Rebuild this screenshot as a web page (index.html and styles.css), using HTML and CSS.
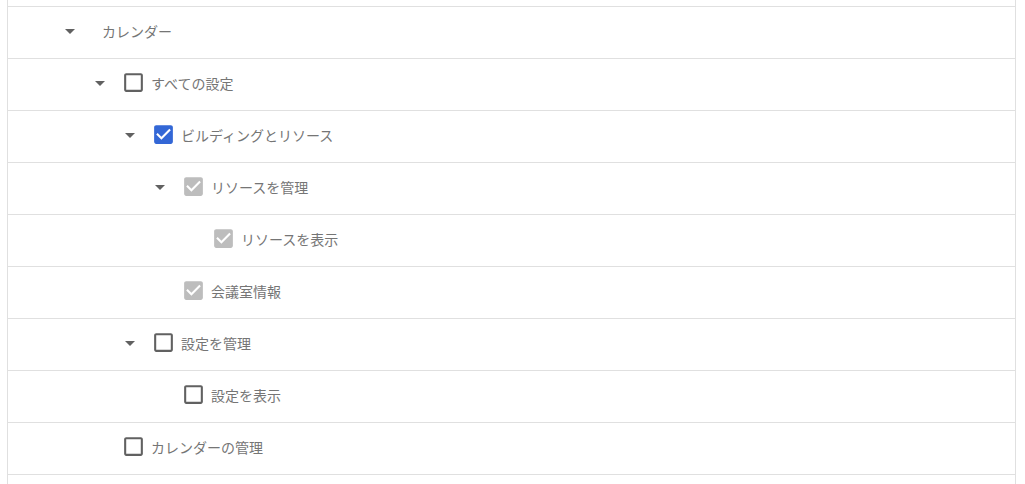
FILE: index.html
```html
<!DOCTYPE html>
<html lang="ja">
<head>
<meta charset="utf-8">
<link rel="stylesheet" href="styles.css">
</head>
<body>
<div class="tree">
  <div class="row lvl0">
    <span class="toggle"><svg viewBox="0 0 24 24"><path d="M7 10l5 5 5-5z"/></svg></span>
    <span class="label label-root">カレンダー</span>
  </div>
  <div class="row lvl1">
    <span class="toggle"><svg viewBox="0 0 24 24"><path d="M7 10l5 5 5-5z"/></svg></span>
    <span class="cb off"><svg viewBox="0 0 24 24"><path d="M19 5v14H5V5h14m0-2H5c-1.1 0-2 .9-2 2v14c0 1.1.9 2 2 2h14c1.1 0 2-.9 2-2V5c0-1.1-.9-2-2-2z"/></svg></span>
    <span class="label">すべての設定</span>
  </div>
  <div class="row lvl2">
    <span class="toggle"><svg viewBox="0 0 24 24"><path d="M7 10l5 5 5-5z"/></svg></span>
    <span class="cb on"><svg viewBox="0 0 24 24"><path d="M19 3H5c-1.11 0-2 .9-2 2v14c0 1.1.89 2 2 2h14c1.11 0 2-.9 2-2V5c0-1.1-.89-2-2-2zm-9 14l-5-5 1.41-1.41L10 14.17l7.59-7.590L19 8l-9 9z"/></svg></span>
    <span class="label">ビルディングとリソース</span>
  </div>
  <div class="row lvl3">
    <span class="toggle"><svg viewBox="0 0 24 24"><path d="M7 10l5 5 5-5z"/></svg></span>
    <span class="cb dis"><svg viewBox="0 0 24 24"><path d="M19 3H5c-1.11 0-2 .9-2 2v14c0 1.1.89 2 2 2h14c1.11 0 2-.9 2-2V5c0-1.1-.89-2-2-2zm-9 14l-5-5 1.41-1.41L10 14.17l7.59-7.59L19 8l-9 9z"/></svg></span>
    <span class="label">リソースを管理</span>
  </div>
  <div class="row lvl4">
    <span class="toggle"></span>
    <span class="cb dis"><svg viewBox="0 0 24 24"><path d="M19 3H5c-1.11 0-2 .9-2 2v14c0 1.1.89 2 2 2h14c1.11 0 2-.9 2-2V5c0-1.1-.89-2-2-2zm-9 14l-5-5 1.41-1.41L10 14.17l7.59-7.59L19 8l-9 9z"/></svg></span>
    <span class="label">リソースを表示</span>
  </div>
  <div class="row lvl3">
    <span class="toggle"></span>
    <span class="cb dis"><svg viewBox="0 0 24 24"><path d="M19 3H5c-1.11 0-2 .9-2 2v14c0 1.1.89 2 2 2h14c1.11 0 2-.9 2-2V5c0-1.1-.89-2-2-2zm-9 14l-5-5 1.41-1.41L10 14.17l7.59-7.59L19 8l-9 9z"/></svg></span>
    <span class="label">会議室情報</span>
  </div>
  <div class="row lvl2">
    <span class="toggle"><svg viewBox="0 0 24 24"><path d="M7 10l5 5 5-5z"/></svg></span>
    <span class="cb off"><svg viewBox="0 0 24 24"><path d="M19 5v14H5V5h14m0-2H5c-1.1 0-2 .9-2 2v14c0 1.1.9 2 2 2h14c1.1 0 2-.9 2-2V5c0-1.1-.9-2-2-2z"/></svg></span>
    <span class="label">設定を管理</span>
  </div>
  <div class="row lvl3">
    <span class="toggle"></span>
    <span class="cb off"><svg viewBox="0 0 24 24"><path d="M19 5v14H5V5h14m0-2H5c-1.1 0-2 .9-2 2v14c0 1.1.9 2 2 2h14c1.1 0 2-.9 2-2V5c0-1.1-.9-2-2-2z"/></svg></span>
    <span class="label">設定を表示</span>
  </div>
  <div class="row lvl1">
    <span class="toggle"></span>
    <span class="cb off"><svg viewBox="0 0 24 24"><path d="M19 5v14H5V5h14m0-2H5c-1.1 0-2 .9-2 2v14c0 1.1.9 2 2 2h14c1.1 0 2-.9 2-2V5c0-1.1-.9-2-2-2z"/></svg></span>
    <span class="label">カレンダーの管理</span>
  </div>
  <div class="row lvl0 tail"></div>
</div>
</body>
</html>
```

FILE: styles.css
```css
* { box-sizing: border-box; }
html, body { margin: 0; padding: 0; background: #fff; height: 100%; overflow: hidden; }
body {
  font-family: "Noto Sans CJK JP", "Noto Sans", Roboto, sans-serif;
  font-size: 14px;
  color: #757575;
}
.tree {
  margin-left: 7px;
  width: 1009px;
  min-height: 484px;
  padding-top: 6px;
  border-left: 1px solid #e0e0e0;
  border-right: 1px solid #e0e0e0;
}
.row {
  display: flex;
  align-items: center;
  height: 52px;
  border-top: 1px solid #e0e0e0;
  padding-left: 50px;
  padding-bottom: 4px;
}
.row.tail { height: 20px; }
.lvl1 { padding-left: 80px; }
.lvl2 { padding-left: 110px; }
.lvl3 { padding-left: 140px; }
.lvl4 { padding-left: 170px; }
.toggle {
  width: 24px;
  height: 24px;
  flex: 0 0 24px;
  display: flex;
}
.toggle svg { width: 24px; height: 24px; fill: #616161; }
.cb {
  width: 25px;
  height: 25px;
  flex: 0 0 25px;
  margin-left: 9px;
  display: flex;
}
.cb svg { width: 25px; height: 25px; }
.cb.off svg { fill: #616161; }
.cb.on svg { fill: #3367d6; }
.cb.dis svg { fill: #bdbdbd; }
.label {
  margin-left: 5px;
  line-height: 20px;
  white-space: nowrap;
}
.label-root { margin-left: 20px; }
```
